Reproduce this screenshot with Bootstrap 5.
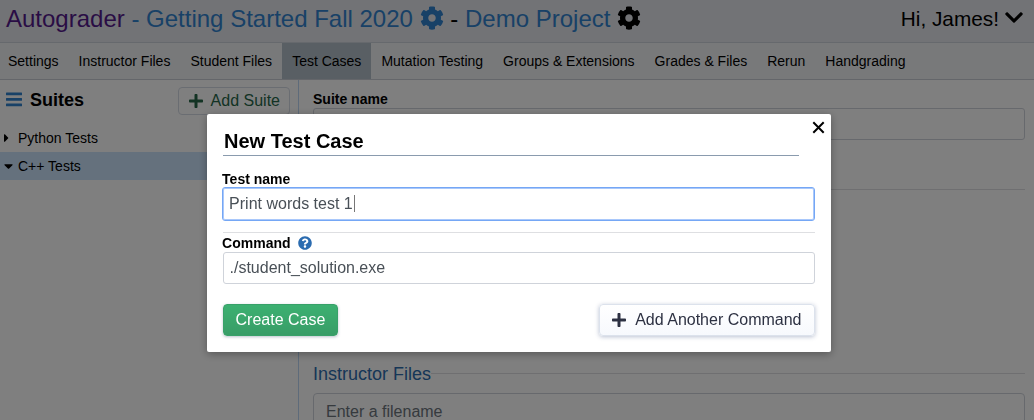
<!DOCTYPE html>
<html lang="en">
<head>
<meta charset="utf-8">
<meta name="viewport" content="width=device-width, initial-scale=1">
<title>Autograder</title>
<link href="https://cdn.jsdelivr.net/npm/bootstrap@5.3.0/dist/css/bootstrap.min.css" rel="stylesheet">
<style>
body{font-family:"Liberation Sans",Arial,sans-serif;font-size:16px;color:#000;height:100vh;overflow:hidden;line-height:1.2}
svg{display:block;flex:none}
.topbar{height:43px;background:#e4e6ec;border-bottom:1px solid #cdd2da;padding:0 11px 4px 6px;font-size:24px}
.topbar a{text-decoration:none;color:#3182ce}
.topbar a.brand{color:#551a8b}
.topbar .gear{margin-top:-2px}
.hello{font-size:20.8px;gap:6px}
.tabs{height:37px;background:#f1f3f5;border-bottom:1px solid #c9cdd4;font-size:14px}
.tabs a{padding:0 10px;color:#000;text-decoration:none;display:flex;align-items:center}
.tabs a:first-child{padding-left:8px}
.tabs a.active{background:#b2bfc9}
.side{width:299px;border-right:1px solid #bcd7f5;flex:none}
.side-head{height:44px;padding:7px 8px 0 6px}
.side-head h2{font-size:18px;font-weight:700;margin:2px 0 0 8px}
.add-suite{height:28px;border:1px solid #d5dae5;border-radius:4px;padding:0 10px;color:#276749;font-size:16px;gap:8px;background:#fff}
.suite{height:28px;padding-left:4px;font-size:14px}
.suite.open{background:#cbe2fa}
.caret-box{width:14px}
.main{padding:11px 9px 0 14px}
.flabel{font-size:14px;font-weight:700;line-height:16px;display:block;margin:0}
.field{height:32px;border:1px solid #cfd3da;border-radius:3px;color:#495057;padding:0 6px;font-size:16px;display:flex;align-items:center;background:#fff}
.rule{height:1px;background:#dedfe2}
.legend-row{font-size:18px;color:#2c6cae}
.shade{position:fixed;inset:0;background:rgba(0,0,0,.5)}
.dialog{width:624px;height:238px;margin:114px 0 0 206.5px;background:#fff;border-radius:2px;box-shadow:0 2px 8px rgba(0,0,0,.33);padding:14px 16px 0;position:relative}
.dialog h1{font-size:20px;font-weight:700;line-height:27px;height:28px;margin:0 16px 15px 0;padding-left:1.5px;border-bottom:1px solid #8a9bae}
.dialog .flabel{margin-left:-.4px}
.dialog .closer{position:absolute;right:6px;top:7px;padding:0;border:0;background:none}
.field.focused{border-color:#75a7f5;height:34px;padding-bottom:1px;box-shadow:inset 0 0 0 1px #a9c8fb}
.cursor{width:1px;height:17px;background:#777;margin-left:1px}
.act{height:32px;font-size:16px;border-radius:4px;padding:0 12px;line-height:1}
.act-green,.act-green:hover{color:#fff;background:linear-gradient(#3cb071,#389d67);border:1px solid #38a169;box-shadow:0 1px 3px rgba(60,80,110,.35)}
.act-light,.act-light:hover{color:#2d3142;background:linear-gradient(#fff,#f7f9fd);border:1px solid #dce2ec;box-shadow:0 1px 4px rgba(60,80,130,.35);gap:9px}
</style>
</head>
<body>
<svg width="0" height="0" class="position-absolute" aria-hidden="true"><defs>
<symbol id="cog" viewBox="0 0 512 512"><path d="M487.4 315.7l-42.6-24.6c4.3-23.2 4.3-47 0-70.2l42.6-24.6c4.9-2.8 7.1-8.6 5.5-14-11.1-35.6-30-67.8-54.7-94.6-3.8-4.1-10-5.1-14.8-2.3L380.8 110c-17.9-15.4-38.5-27.3-60.8-35.1V25.8c0-5.6-3.9-10.5-9.4-11.7-36.7-8.2-74.3-7.8-109.2 0-5.5 1.2-9.4 6.1-9.4 11.7V75c-22.2 7.9-42.8 19.8-60.8 35.1L88.7 85.5c-4.9-2.8-11-1.9-14.8 2.3-24.7 26.7-43.6 58.9-54.7 94.6-1.7 5.4.6 11.2 5.5 14L67.3 221c-4.3 23.2-4.3 47 0 70.2l-42.6 24.6c-4.9 2.8-7.1 8.6-5.5 14 11.1 35.6 30 67.8 54.7 94.6 3.8 4.1 10 5.1 14.8 2.3l42.6-24.6c17.9 15.4 38.5 27.3 60.8 35.1v49.2c0 5.6 3.9 10.5 9.4 11.7 36.7 8.2 74.3 7.8 109.2 0 5.5-1.2 9.4-6.1 9.4-11.7v-49.2c22.2-7.9 42.8-19.8 60.8-35.1l42.6 24.6c4.9 2.8 11 1.9 14.8-2.3 24.7-26.7 43.6-58.9 54.7-94.6 1.5-5.5-.7-11.3-5.6-14.1zM256 336c-44.1 0-80-35.9-80-80s35.9-80 80-80 80 35.9 80 80-35.9 80-80 80z"/></symbol>
<symbol id="plus" viewBox="0 0 448 512"><path d="M416 208H272V64c0-17.67-14.33-32-32-32h-32c-17.67 0-32 14.33-32 32v144H32c-17.67 0-32 14.33-32 32v32c0 17.67 14.33 32 32 32h144v144c0 17.67 14.33 32 32 32h32c17.67 0 32-14.33 32-32V304h144c17.67 0 32-14.33 32-32v-32c0-17.67-14.33-32-32-32z"/></symbol>
</defs></svg>

<header class="topbar d-flex align-items-center">
  <div class="d-flex align-items-center text-nowrap">
    <a href="#" class="brand">Autograder</a><a href="#">&nbsp;- Getting Started Fall 2020</a>
    <a href="#" style="margin-left:6.8px"><svg class="gear" width="24" height="24" fill="currentColor"><use href="#cog"/></svg></a>
    <span>&nbsp;-&nbsp;</span><a href="#">Demo Project</a>
    <svg class="gear" style="margin-left:6.500px" width="24" height="24"><use href="#cog"/></svg>
  </div>
  <div class="hello d-flex align-items-center ms-auto text-nowrap">Hi, James!
    <svg width="18" height="21" style="margin-top:-2px" viewBox="0 0 448 512"><path d="M207.029 381.476L12.686 187.132c-9.373-9.373-9.373-24.569 0-33.941l22.667-22.667c9.357-9.357 24.522-9.375 33.901-.04L224 284.505l154.745-154.021c9.379-9.335 24.544-9.317 33.901.04l22.667 22.667c9.373 9.373 9.373 24.569 0 33.941L240.971 381.476c-9.373 9.372-24.569 9.372-33.942 0z"/></svg>
  </div>
</header>
<nav class="tabs d-flex align-items-stretch text-nowrap">
  <a href="#">Settings</a><a href="#">Instructor Files</a><a href="#">Student Files</a><a href="#" class="active">Test Cases</a><a href="#">Mutation Testing</a><a href="#">Groups &amp; Extensions</a><a href="#">Grades &amp; Files</a><a href="#">Rerun</a><a href="#">Handgrading</a>
</nav>
<div class="d-flex" style="height:340px">
  <aside class="side">
    <div class="side-head d-flex align-items-start">
      <div class="d-flex align-items-center" style="height:26px">
        <svg width="16" height="18" viewBox="0 0 16 18" fill="#3182ce"><path d="M.5 1.500h15q.5 0 .5.5v1.700q0 .5-.5.5H.5q-.5 0-.5-.5V2q0-.5.5-.5zM.5 7h15q.5 0 .5.5v1.700q0 .5-.5.5H.5q-.5 0-.5-.5V7.500q0-.5.5-.5zM.5 12.500h15q.5 0 .5.5v1.700q0 .5-.5.5H.5q-.5 0-.5-.5v-1.700q0-.5.5-.5z"/></svg>
        <h2>Suites</h2>
      </div>
      <button class="add-suite d-flex align-items-center ms-auto" style="padding-right:9px"><svg width="14" height="16" fill="#276749"><use href="#plus"/></svg>Add Suite</button>
    </div>
    <div class="suite d-flex align-items-center"><span class="caret-box"><svg width="5" height="14" viewBox="0 0 192 512"><path d="M0 384.662V127.338c0-17.818 21.543-26.741 34.142-14.142l128.662 128.662c7.81 7.81 7.81 20.474 0 28.284L34.142 398.804C21.543 411.404 0 402.48 0 384.662z"/></svg></span>Python Tests</div>
    <div class="suite open d-flex align-items-center"><span class="caret-box"><svg width="9" height="14" viewBox="0 0 320 512"><path d="M31.3 192h257.3c17.800 0 26.700 21.500 14.100 34.100L174.100 354.800c-7.800 7.800-20.500 7.800-28.300 0L17.200 226.100C4.600 213.500 13.500 192 31.300 192z"/></svg></span>C++ Tests</div>
  </aside>
  <main class="main flex-grow-1">
    <label class="flabel">Suite name</label>
    <div class="field" style="margin-top:1px"></div>
    <div class="rule" style="margin-top:49px"></div>
    <div class="legend-row d-flex align-items-center" style="margin-top:174px"><span>Instructor Files</span><div class="rule flex-grow-1" style="margin-top:-2px"></div></div>
    <div class="field" style="margin-top:7px;height:38px;padding:0 12px;border-radius:4px;color:#6c757d">Enter a filename</div>
  </main>
</div>

<div class="shade">
  <section class="dialog" role="dialog" aria-label="New Test Case">
    <button class="closer" aria-label="Close"><svg width="13" height="13" viewBox="0 0 13 13" stroke="#000" stroke-width="2"><path d="M1.300 1.300l10.400 10.400M11.700 1.300L1.300 11.700"/></svg></button>
    <h1>New Test Case</h1>
    <label class="flabel">Test name</label>
    <div class="field focused" style="margin:0 0 0 -.4px">Print words test 1<span class="cursor"></span></div>
    <div class="rule" style="margin:11px 0 2px"></div>
    <label class="flabel d-flex align-items-center">Command<svg style="margin-left:7.500px" width="14" height="14" viewBox="0 0 512 512" fill="#2b6cb0"><path d="M504 256c0 136.997-111.043 248-248 248S8 392.997 8 256C8 119.083 119.043 8 256 8s248 111.083 248 248zM262.655 90c-54.497 0-89.255 22.957-116.549 63.758-3.536 5.286-2.353 12.415 2.715 16.258l34.699 26.31c5.205 3.947 12.621 3.008 16.665-2.122 17.864-22.658 30.113-35.797 57.303-35.797 20.429 0 45.698 13.148 45.698 32.958 0 14.976-12.363 22.667-32.534 33.976C247.128 238.528 216 254.941 216 296v4c0 6.627 5.373 12 12 12h56c6.627 0 12-5.373 12-12v-1.333c0-28.462 83.186-29.647 83.186-106.667 0-58.002-60.165-102-116.531-102zM256 338c-25.365 0-46 20.635-46 46 0 25.364 20.635 46 46 46s46-20.636 46-46c0-25.364-20.635-46-46-46z"/></svg></label>
    <div class="field" style="margin-top:1px">./student_solution.exe</div>
    <div class="d-flex justify-content-between" style="margin-top:20px">
      <button class="btn act act-green">Create Case</button>
      <button class="btn act act-light d-flex align-items-center"><svg width="14" height="16" fill="currentColor"><use href="#plus"/></svg>Add Another Command</button>
    </div>
  </section>
</div>
<script src="https://cdn.jsdelivr.net/npm/bootstrap@5.3.0/dist/js/bootstrap.bundle.min.js"></script>
</body>
</html>
